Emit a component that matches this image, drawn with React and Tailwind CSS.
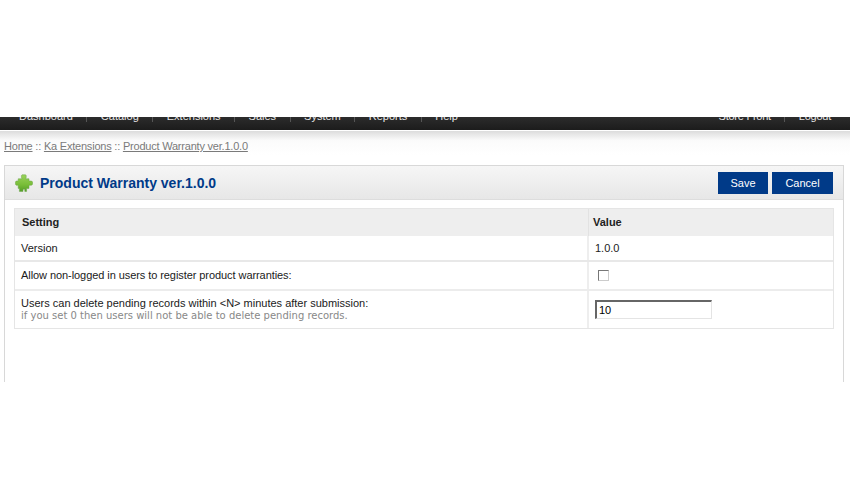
import { Fragment } from "react";

const leftMenu = ["Dashboard", "Catalog", "Extensions", "Sales", "System", "Reports", "Help"];
const rightMenu = ["Store Front", "Logout"];

const MenuList = ({ items, className }) => (
    <ul className={`flex items-start gap-[13.5px] ${className}`}>
        {items.map((item, i) => (
            <Fragment key={item}>
                {i > 0 && <li className="w-px h-[14px] bg-[#555] mt-[-1px]"></li>}
                <li className="text-[11px] leading-[14px] text-[#e8e8e8]">{item}</li>
            </Fragment>
        ))}
    </ul>
);

const PuzzleIcon = () => (
    <svg width="18" height="18" viewBox="0 0 18 18" className="shrink-0">
        <defs>
            <linearGradient id="puzzle" x1="0" y1="0" x2="0" y2="1">
                <stop offset="0" stopColor="#9ad35a" />
                <stop offset=".6" stopColor="#78bd38" />
                <stop offset="1" stopColor="#559e28" />
            </linearGradient>
        </defs>
        <path
            d="M7 .8 H10.6 L11.2 1.6 V3.4 L10.6 4.8 H14 V7 H16.6 L17.6 8 V10.2 L16.6 11.2 H14 V14.4 H11.6 V17.4 H9.8 V15.2 H8 V17.4 H4.4 V14.4 H3.2 V11.2 H1.2 L.4 10.2 V8 L1.2 7 H3.2 V4.8 H7 L6.4 3.4 V1.6 Z"
            fill="url(#puzzle)"
            stroke="#6aa548"
            strokeWidth=".5"
            strokeLinejoin="round"
        />
    </svg>
);

const Button = ({ children, width }) => (
    <button className={`${width} h-[22px] bg-[#003a88] text-white text-[11px] leading-[22px] text-center`}>
        {children}
    </button>
);

export default function App() {
    return (
        <div className="w-[850px] h-[500px] bg-white overflow-hidden text-[11px] text-[#1a1a1a] font-['Liberation_Sans',Arial,sans-serif]">
            <div className="h-[117px]"></div>
            <div className="h-[265px] overflow-hidden">
                <nav className="h-[13px] overflow-hidden bg-gradient-to-b from-[#2c2c2c] to-[#1c1c1c] flex justify-between px-[19px]">
                    <div className="mt-[-8px]"><MenuList items={leftMenu} /></div>
                    <div className="mt-[-8px]"><MenuList items={rightMenu} className="tracking-[-0.25px]" /></div>
                </nav>
                <div className="pt-px">
                    <div className="h-[24px] bg-gradient-to-b from-[#dcdcdc] via-[#fbfbfb] via-40% to-white px-1 flex items-end pb-[2px]">
                        <div className="text-[11px] leading-[14px] text-[#7a7a7a] tracking-[-0.21px]">
                            <span className="underline">Home</span> :: <span className="underline">Ka Extensions</span> :: <span className="underline">Product Warranty ver.1.0.0</span>
                        </div>
                    </div>
                </div>
                <section className="ml-1 mr-[6px] mt-[10px] h-[240px] border-x border-t border-[#d8d8d8]">
                    <header className="h-[34px] bg-gradient-to-b from-[#f6f6f6] to-[#e7e7e7] border-b border-[#dddddd] flex items-center justify-between px-[10px]">
                        <div className="flex items-center gap-[7px]">
                            <PuzzleIcon />
                            <h1 className="text-[14px] leading-[18px] font-bold text-[#003a88]">Product Warranty ver.1.0.0</h1>
                        </div>
                        <div className="flex gap-1">
                            <Button width="w-[50px]">Save</Button>
                            <Button width="w-[61px]">Cancel</Button>
                        </div>
                    </header>
                    <div className="pl-[9px] pt-2">
                        <div className="w-[820px] border border-[#e5e5e5]">
                            <div className="grid grid-cols-[574px_1fr] h-[27px] bg-[#eeeeee] font-bold text-[#222]">
                                <div className="pl-[7px] leading-[26px] border-r border-[#e2e2e2]">Setting</div>
                                <div className="pl-[4px] leading-[26px]">Value</div>
                            </div>
                            <div className="grid grid-cols-[574px_1fr] h-[26px] border-b-2 border-[#e8e8e8]">
                                <div className="pl-[6px] leading-[24px] border-r-2 border-[#eeeeee]">Version</div>
                                <div className="pl-[6px] leading-[24px] text-[#222]">1.0.0</div>
                            </div>
                            <div className="grid grid-cols-[574px_1fr] h-[29px] border-b-2 border-[#ececec]">
                                <div className="pl-[6px] leading-[27px] border-r-2 border-[#eeeeee] tracking-[-0.07px]">Allow non-logged in users to register product warranties:</div>
                                <div className="pl-[9px] flex items-center">
                                    <span className="w-[11px] h-[11px] border border-[#777] border-r-[#ccc] border-b-[#ccc] bg-white"></span>
                                </div>
                            </div>
                            <div className="grid grid-cols-[574px_1fr] h-[37px]">
                                <div className="pl-[6px] pt-[5px] border-r-2 border-[#eeeeee]">
                                    <div className="leading-[14px]">Users can delete pending records within &lt;N&gt; minutes after submission:</div>
                                    <div className="text-[10px] leading-[12px] text-[#888] font-['DejaVu_Sans',Verdana,sans-serif]">if you set 0 then users will not be able to delete pending records.</div>
                                </div>
                                <div className="pl-[6px] pt-[9px]">
                                    <input
                                        readOnly
                                        value="10"
                                        className="block w-[117px] h-[19px] pl-[2px] text-[11px] text-black bg-white border border-[#e4e4e4] border-t-2 border-l-2 border-t-[#666] border-l-[#666] outline-none"
                                    />
                                </div>
                            </div>
                        </div>
                    </div>
                </section>
            </div>
        </div>
    );
}
